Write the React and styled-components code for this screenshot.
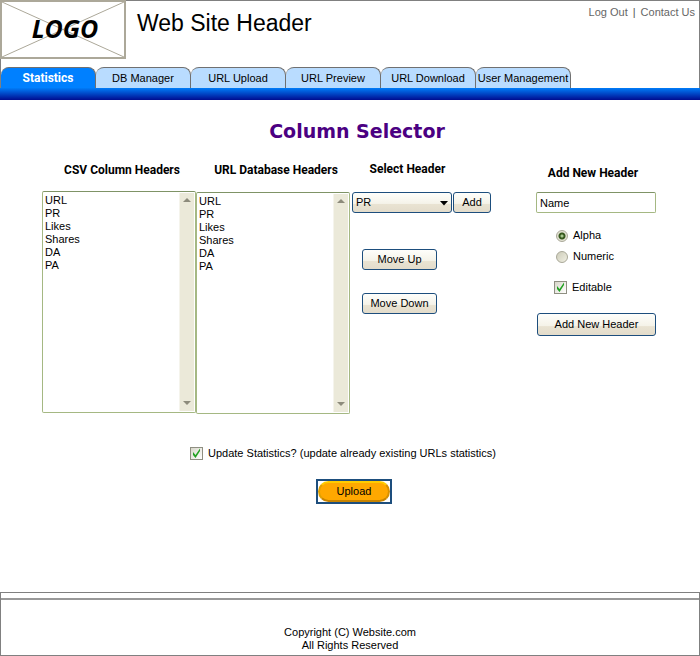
import React, { useState } from "react";
import styled, { createGlobalStyle, css } from "styled-components";

const GlobalStyle = createGlobalStyle`
  *, *::before, *::after { box-sizing: border-box; }
  body {
    margin: 0;
    background: #fff;
    color: #000;
    font: 11px/13px "Liberation Sans", Arial, sans-serif;
  }
  button, input, select { font: inherit; color: inherit; margin: 0; }
  h1, h2, p, ul { margin: 0; padding: 0; }
`;

const Page = styled.div`
  min-height: 100vh;
  display: flex;
  flex-direction: column;
`;

const Header = styled.header`
  display: flex;
  align-items: flex-start;
  border: 1px solid #808080;
  border-bottom: 0;
  height: 67px;
`;

const Logo = styled.svg`
  flex: none;
  width: 126px;
  height: 59px;
  margin: -1px 0 0 -1px;
`;

const SiteTitle = styled.h1`
  flex: 1;
  margin: 8px 0 0 11px;
  font-size: 23px;
  line-height: 28px;
  font-weight: 400;
`;

const UserLinks = styled.nav`
  display: flex;
  gap: 5px;
  padding: 5px 4px 0 0;
  color: #555;
`;

const UserLink = styled.a`
  color: #666;
  text-decoration: none;
`;

const Tabs = styled.nav`
  display: flex;
  border: 1px solid #808080;
  border-width: 0 1px;
`;

const Tab = styled.a`
  width: 95px;
  height: 21px;
  padding-top: 4px;
  border: 1px solid #707070;
  border-width: 1px 1px 0 0;
  border-radius: 8px 8px 0 0;
  background: #b9dcff;
  color: #000;
  text-align: center;
  text-decoration: none;
  white-space: nowrap;
  ${(p) => p.$active && css`
    background: #0080ff;
    color: #fff;
    font: 700 12px/13px Roboto, Arial, sans-serif;
  `}
`;

const Bar = styled.div`
  height: 12px;
  background: linear-gradient(#007cf8, #000c90);
`;

const Main = styled.main`
  flex: 1;
  padding: 20px 42px 0;
`;

const Heading = styled.h2`
  margin-left: 14px;
  color: #4b0082;
  font: 700 19px/22px "DejaVu Sans", Verdana, sans-serif;
  text-align: center;
`;

const Columns = styled.div`
  display: flex;
  align-items: flex-start;
  margin-top: 20px;
`;

const Column = styled.section`
  flex: none;
  width: ${(p) => p.$width}px;
  margin-left: ${(p) => p.$gap || 0}px;
`;

const Label = styled.h2`
  height: ${(p) => p.$height}px;
  padding: ${(p) => p.$pad};
  font: 700 12px/13px Roboto, Arial, sans-serif;
  text-align: center;
  white-space: nowrap;
`;

const ListFrame = styled.div`
  display: flex;
  height: 222px;
  border: 1px solid #a5b883;
  border-top-color: #7f9366;
  border-radius: 2px;
  padding: 1px;
`;

const ListItems = styled.ul`
  flex: 1;
  padding: 1px 1px;
  list-style: none;
`;

const Track = styled.div`
  width: 15px;
  display: flex;
  flex-direction: column;
  justify-content: space-between;
  align-items: center;
  padding: 5px 0;
  background: #ebe9d9;
  border-left: 1px solid #f5f4ec;
`;

const controlSkin = css`
  border: 1px solid #1d4e7d;
  border-radius: 3px;
  background: linear-gradient(#fefefb, #f5f3e9 55%, #e9e3d2 60%, #e3dccb);
`;

const Button = styled.button`
  ${controlSkin}
  display: block;
  width: ${(p) => p.$width}px;
  height: ${(p) => p.$height || 21}px;
  padding: 0;
  margin: ${(p) => p.$margin || "0"};
`;

const PickRow = styled.div`
  display: flex;
  gap: 1px;
`;

const SelectWrap = styled.div`
  position: relative;
  width: 100px;
`;

const Select = styled.select`
  ${controlSkin}
  appearance: none;
  width: 100%;
  height: 21px;
  padding: 0 3px;
`;

const SelectArrow = styled.svg`
  position: absolute;
  right: 4px;
  top: 9px;
  pointer-events: none;
`;

const TextInput = styled.input`
  display: block;
  width: 120px;
  height: 21px;
  padding: 0 3px;
  border: 1px solid #a5b883;
  border-top-color: #7f9366;
  border-radius: 2px;
  background: #fff;
`;

const Option = styled.label`
  display: flex;
  align-items: center;
  gap: 5px;
  height: 13px;
  margin: ${(p) => p.$margin || "0"};
`;

const Radio = styled.input`
  appearance: none;
  width: 12px;
  height: 12px;
  border: 1px solid #a9a898;
  border-radius: 50%;
  background: linear-gradient(135deg, #cdccba, #f0efe2);
  &:checked {
    background: radial-gradient(circle, #a8c890 0 1px, #37591f 2px 3px, #e3e2d3 4px);
  }
`;

const Tick = styled.span`
  display: grid;
  width: 13px;
  height: 13px;
  border: 1px solid #8f8f82;
  background: linear-gradient(135deg, #d8d7ca, #fff);
  input, svg { grid-area: 1 / 1; }
  input { appearance: none; width: 11px; height: 11px; }
  input:not(:checked) + svg { visibility: hidden; }
  svg { pointer-events: none; }
`;

const Submit = styled.div`
  display: flex;
  flex-direction: column;
  align-items: center;
  margin-top: 33px;
`;

const UploadButton = styled.button`
  width: 76px;
  height: 25px;
  margin: 19px 0 0 8px;
  padding: 0;
  border: 2px solid #1d4e7d;
  background: #fff;
`;

const Pill = styled.span`
  display: block;
  height: 21px;
  line-height: 17px;
  border: 2px solid;
  border-color: #ffcc00 #d69000 #c88400 #e0a000;
  border-radius: 11px;
  background: #ffa800;
`;

const Footer = styled.footer`
  margin-top: 20px;
  border: 1px solid #808080;
  height: 64px;
  padding-top: 5px;
`;

const FooterText = styled.div`
  border-top: 2px solid #999;
  padding-top: 26px;
  text-align: center;
`;

const names = ["URL", "PR", "Likes", "Shares", "DA", "PA"];

function ListBox() {
  return (
    <ListFrame>
      <ListItems>{names.map((n) => <li key={n}>{n}</li>)}</ListItems>
      <Track>
        <svg width="8" height="5"><path d="M0 4h8L4 0z" fill="#8d8b7c" /></svg>
        <svg width="8" height="5"><path d="M0 0h8L4 4z" fill="#8d8b7c" /></svg>
      </Track>
    </ListFrame>
  );
}

function CheckBox({ children, ...rest }) {
  return (
    <Option {...rest}>
      <Tick>
        <input type="checkbox" defaultChecked />
        <svg width="11" height="11"><path d="M2 4v3l2.5 3L9 3V.5L4.5 7z" fill="#21a121" /></svg>
      </Tick>
      {children}
    </Option>
  );
}

const tabs = ["Statistics", "DB Manager", "URL Upload", "URL Preview", "URL Download", "User Management"];

export default function App() {
  const [kind, setKind] = useState("alpha");
  return (
    <Page>
      <GlobalStyle />
      <Header>
        <Logo viewBox="0 0 126 59" role="img" aria-label="Logo">
          <rect x="1" y="1" width="124" height="57" fill="#fff" stroke="#aca899" strokeWidth="2" />
          <path d="M2 2L124 57M2 57L124 2" stroke="#aca899" />
          <text x="65" y="38" textAnchor="middle" fontFamily="Open Sans, Verdana, sans-serif" fontSize="25" fontWeight="700" fontStyle="italic">LOGO</text>
        </Logo>
        <SiteTitle>Web Site Header</SiteTitle>
        <UserLinks>
          <UserLink href="#logout">Log Out</UserLink>
          <span>|</span>
          <UserLink href="#contact">Contact Us</UserLink>
        </UserLinks>
      </Header>
      <Tabs>
        {tabs.map((t, i) => <Tab key={t} href={`#tab${i}`} $active={i === 0}>{t}</Tab>)}
      </Tabs>
      <Bar />
      <Main>
        <Heading>Column Selector</Heading>
        <Columns>
          <Column $width={154}>
            <Label $pad="2px 0 0 6px" $height={29}>CSV Column Headers</Label>
            <ListBox />
          </Column>
          <Column $width={154}>
            <Label $pad="2px 0 0 6px" $height={30}>URL Database Headers</Label>
            <ListBox />
          </Column>
          <Column $width={139} $gap={2}>
            <Label $pad="1px 28px 0 0" $height={30}>Select Header</Label>
            <PickRow>
              <SelectWrap>
                <Select aria-label="Select Header" defaultValue="PR">
                  {names.map((n) => <option key={n}>{n}</option>)}
                </Select>
                <SelectArrow width="8" height="5"><path d="M0 0h8L4 4.5z" /></SelectArrow>
              </SelectWrap>
              <Button $width={38}>Add</Button>
            </PickRow>
            <Button $width={75} $margin="36px 0 0 10px">Move Up</Button>
            <Button $width={75} $margin="23px 0 0 10px">Move Down</Button>
          </Column>
          <Column $width={120} $gap={45}>
            <Label $pad="5px 6px 0 0" $height={30}>Add New Header</Label>
            <TextInput aria-label="Header name" defaultValue="Name" />
            <Option $margin="16px 0 0 20px">
              <Radio type="radio" name="kind" checked={kind === "alpha"} onChange={() => setKind("alpha")} />
              Alpha
            </Option>
            <Option $margin="8px 0 0 20px">
              <Radio type="radio" name="kind" checked={kind === "numeric"} onChange={() => setKind("numeric")} />
              Numeric
            </Option>
            <CheckBox $margin="18px 0 0 18px">Editable</CheckBox>
            <Button $width={119} $height={23} $margin="19px 0 0 1px">Add New Header</Button>
          </Column>
        </Columns>
        <Submit>
          <CheckBox $margin="0 14px 0 0">Update Statistics? (update already existing URLs statistics)</CheckBox>
          <UploadButton><Pill>Upload</Pill></UploadButton>
        </Submit>
      </Main>
      <Footer>
        <FooterText>
          <p>Copyright (C) Website.com</p>
          <p>All Rights Reserved</p>
        </FooterText>
      </Footer>
    </Page>
  );
}
